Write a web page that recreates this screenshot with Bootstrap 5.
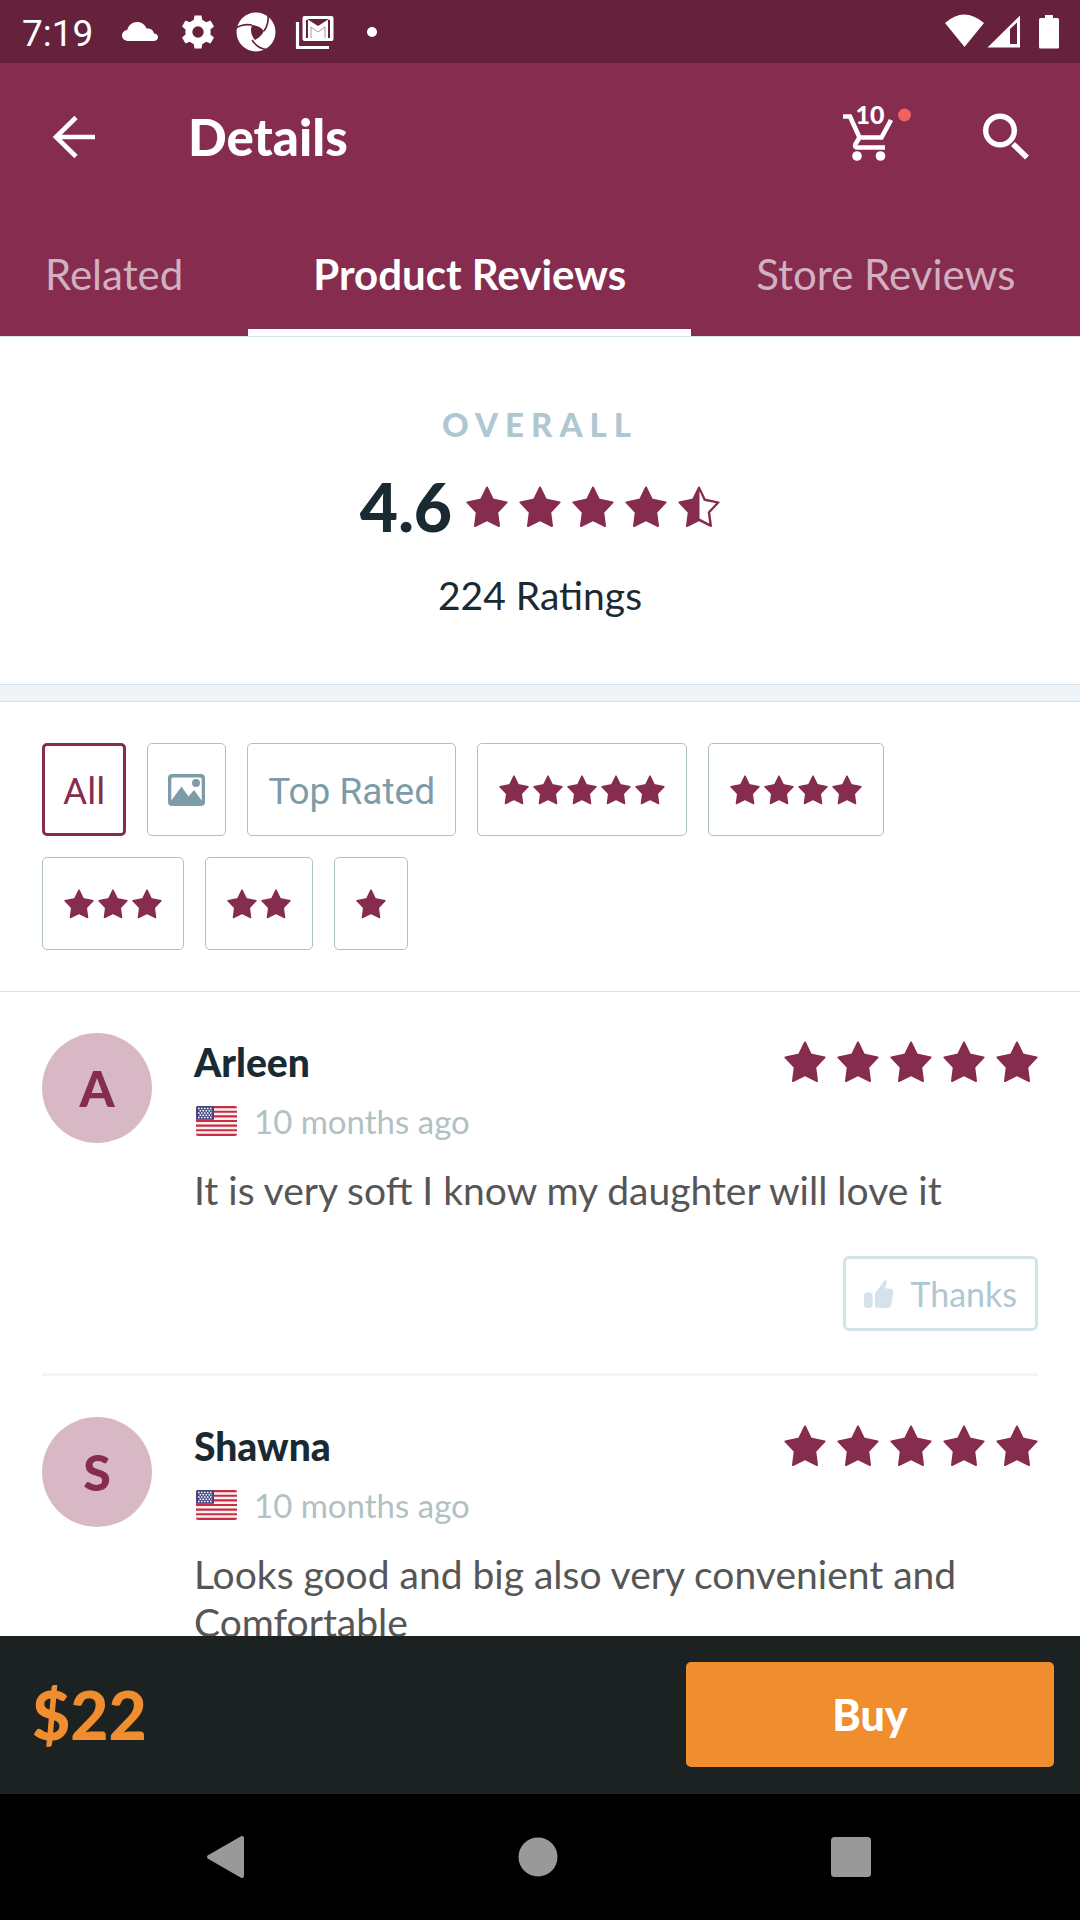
<!DOCTYPE html>
<html lang="en">
<head>
<meta charset="utf-8">
<meta name="viewport" content="width=device-width, initial-scale=1">
<title>Details</title>
<link href="https://cdn.jsdelivr.net/npm/bootstrap@5.3.0/dist/css/bootstrap.min.css" rel="stylesheet">
<style>
:root{--wine:#862c4f;--wine-dark:#66213c;--ink:#1a2a32;--mist:#afc7d1;--line:#d4e2ea;--orange:#f08d2e}
body{font-family:Lato,"Open Sans",sans-serif;color:var(--ink);background:#fff;font-size:39px;line-height:48px}
svg{display:block;flex:none;overflow:visible}
.screen{height:100vh;overflow:hidden}
.screen > main{min-height:0;flex:1 1 0}
.status-bar{background:var(--wine-dark);height:63px;padding:0 10px 0 22px;font-family:Roboto,sans-serif;font-size:37px}
.status-bar > span{padding-top:4px}
.status-icons{gap:16px;margin-left:26px}
.app-top{background:var(--wine);border-bottom:1px solid var(--line)}
.app-bar{height:147px;padding:0 42px}
.app-title{font-size:51px;line-height:56px;margin-left:82px;font-weight:900}
.bare{background:none;border:0;padding:0;color:inherit}
.app-actions{gap:70px}
.tab-link{display:flex;align-items:center;justify-content:center;height:126px;padding:2px 65px 0;color:#d1b0bf;font-size:42px;border-bottom:7px solid transparent;border-top:7px solid transparent;white-space:nowrap}
.tab-link.first{padding-left:45px}
.tab-link.active{color:#fff;font-weight:700;border-bottom-color:#fff}
.overall{padding:66px 42px 65px}
.overall-label{font-size:33px;line-height:42px;letter-spacing:7px;color:var(--mist);font-weight:900;margin:0 0 30px}
.score{font-size:66px;line-height:64px;font-weight:900;margin-right:14px}
.band{height:18px;background:#eef4f8;border:solid var(--line);border-width:1px 0}
.filters{padding:41px 42px;gap:21px;border-bottom:1px solid var(--line)}
.chip{background:#fff;border:1px solid #b0c1c1;border-radius:5px;height:93px;padding:0 20px;color:#7e9ba9;font-family:Roboto,sans-serif;font-size:37px;display:flex;align-items:center}
.chip.chosen{border:3px solid var(--wine);color:var(--wine);padding:0 18px}
.chip.stars{gap:4px;padding:0 21px}
.star{width:42px;height:42px;fill:var(--wine);stroke:var(--wine)}
.star-sm{width:30px;height:30px}
.star-row{gap:11px}
.review{padding-top:41px;margin:0 42px;gap:42px}
.review-body{padding-top:8px;padding-bottom:42px}
.review-rule{height:3px;background:#f2f7f8;margin:0 42px}
.avatar{width:110px;height:110px;background:#d7b8c4;color:var(--wine);font-size:50px;font-weight:900;flex:none}
.reviewer{font-size:39px;line-height:42px;font-weight:900}
.when{font-size:33px;line-height:42px;color:#b0c2c2;gap:16px;margin-top:17px}
.comment{color:#565656;margin:24px 0 42px}
.thanks{border:3px solid var(--line);border-radius:6px;background:#fff;color:var(--mist);height:75px;padding:0 18px;font-size:34px;gap:16px}
.buy-bar{background:#1c2122;padding:26px 26px 27px 32px}
.price{color:var(--orange);font-size:66px;line-height:64px;font-weight:900}
.buy{background:var(--orange);color:#fff;border:0;border-radius:5px;width:36%;height:105px;font-size:43px;font-weight:900}
.sys-nav{background:#000;height:126px;padding:0 72px 0 68px}
</style>
<script src="https://cdn.jsdelivr.net/npm/bootstrap@5.3.0/dist/js/bootstrap.bundle.min.js"></script>
</head>
<body>
<svg width="0" height="0" class="position-absolute" aria-hidden="true">
<symbol id="star" viewBox="0 0 42 42"><path d="M21 1.5 26.8 13.5 40.6 16.4 31.2 26.2 33 40 21 34.2 9 40 10.8 26.2 1.4 16.4 15.2 13.5Z" stroke-width="2" stroke-linejoin="round"/></symbol>
<symbol id="flag" viewBox="0 0 42 30">
<clipPath id="fc"><rect width="41" height="30" rx="2"/></clipPath>
<g clip-path="url(#fc)"><rect width="42" height="30" fill="#f5f2f2"/>
<path d="M0 1.15H42M0 5.75H42M0 10.4H42M0 15H42M0 19.6H42M0 24.2H42M0 28.85H42" stroke="#cc2c42" stroke-width="2.1"/>
<rect width="18" height="13.8" fill="#45467f"/>
<path d="M2 2.5H17M2 7H17M2 11.5H17" stroke="#fff" stroke-width="1.5" stroke-dasharray="1.6 1.4"/>
<path d="M3.5 4.8H16M3.5 9.3H16" stroke="#fff" stroke-width="1.5" stroke-dasharray="1.6 1.4"/></g>
</symbol>
<symbol id="thumb" viewBox="0 0 30 30"><rect x="0" y="13.5" width="8.6" height="15.5" rx="3.4"/><path d="M11 15.500C11 13.500 12 12.700 13.500 11L20.500 1.500C22 -.2 23.400 2.200 22.500 4.500L21.500 7.500C21.200 9 22 9.800 23.500 9.800H26.500C28.800 9.800 29.400 11.300 29.200 13L27.500 24.500C27 27.500 25.800 29 23 29H14.500C12 29 11 28.200 11 25.800Z"/></symbol>
</svg>

<div class="screen d-flex flex-column">
<div class="status-bar flex-shrink-0 d-flex align-items-center text-white">
  <span>7:19</span>
  <div class="status-icons d-flex">
    <svg width="42" height="42" viewBox="0 0 42 42" fill="#fff"><path d="M10 30C5.500 30 3 27.500 3 24.500 3 21.500 5.500 19.200 8.200 19 9.500 14 13.300 11 18 11 22.500 11 26 13.500 27.500 17.500 32 17 34.500 19.500 34.700 22.200 37.500 22.500 39 24.200 39 26.200 39 28.500 37 30 34.500 30Z"/></svg>
    <svg width="42" height="42" viewBox="-21 -21 42 42" fill="#fff"><path fill-rule="evenodd" d="M-3.500-16.500H3.500L4.300-12A13 13 0 0 1 8.200-9.800L12.500-11.500 16-5.400 12.400-2.500A13 13 0 0 1 12.400 2.500L16 5.400 12.500 11.500 8.200 9.800A13 13 0 0 1 4.300 12L3.500 16.500H-3.500L-4.300 12A13 13 0 0 1-8.200 9.800L-12.500 11.500-16 5.400-12.400 2.500A13 13 0 0 1-12.400-2.500L-16-5.400-12.500-11.500-8.200-9.800A13 13 0 0 1-4.300-12ZM0-5.700A5.700 5.700 0 1 0 0 5.700 5.700 5.700 0 1 0 0-5.700Z"/></svg>
    <svg width="42" height="42" viewBox="-21 -21 42 42"><circle r="19.500" fill="#fff"/><path d="M-4-7Q3-7 8-1Q5 5-1 8Q-7 1-4-7Z" fill="#66213c"/><g fill="none" stroke="#66213c" stroke-width="1.600"><path d="M-20-4Q-13-8.500-4-7"/><path d="M12-17Q13-8 8-1"/><path d="M-4 8Q1 16 10 17.500"/></g></svg>
    <svg width="42" height="42" viewBox="0 0 42 42" fill="none" stroke="#fff"><path d="M4.500 11V36.500H36" stroke-width="3.200"/><rect x="9.500" y="5" width="31" height="25" rx="2" fill="#fff" stroke="none"/><path d="M14 8H36L25 15Z" fill="#66213c" stroke="none"/><path d="M14 9V27M36 9V27" stroke="#66213c" stroke-width="2"/><path d="M18 27V16L25 21 32 16V27" stroke="#66213c" stroke-width="1" opacity=".5"/></svg>
    <svg width="42" height="42" viewBox="0 0 42 42" fill="#fff"><circle cx="21" cy="21" r="5"/></svg>
  </div>
  <div class="d-flex ms-auto">
    <svg width="40" height="42" viewBox="0 0 40 42" fill="#fff"><path d="M20.500 36 1 12Q20-5 40 12Z"/></svg>
    <svg width="40" height="42" viewBox="0 0 40 42"><path d="M3.500 36.500H36V4.500Z" fill="#fff"/><path d="M26 18 33 11.500V33H26Z" fill="#66213c"/></svg>
    <svg class="ms-1" width="42" height="42" viewBox="0 0 42 42" fill="#fff"><path d="M17 4H25V7H29.500Q31 7 31 8.500V36Q31 37.500 29.500 37.500H12.500Q11 37.500 11 36V8.500Q11 7 12.500 7H17Z"/></svg>
  </div>
</div>

<header class="app-top flex-shrink-0 text-white">
  <div class="app-bar d-flex align-items-center">
    <button class="bare" aria-label="Back"><svg width="64" height="64" viewBox="0 0 64 64" fill="none" stroke="#fff" stroke-width="4.600"><path d="M53 32H14M34 12.500 14 32 34 51.500"/></svg></button>
    <h1 class="app-title mb-0">Details</h1>
    <div class="app-actions d-flex align-items-center ms-auto">
      <button class="bare" aria-label="Cart, 10 items"><svg width="70" height="64" viewBox="0 0 70 64" fill="none" stroke="#fff" stroke-width="4.600"><path d="M0 11.500H7L16.500 32.500H38.500L48 15M16.500 32.500 12.500 39Q11 42.500 15 42.500H42"/><circle cx="14" cy="51" r="4.800" fill="#fff" stroke="none"/><circle cx="37.500" cy="51" r="4.800" fill="#fff" stroke="none"/><circle cx="61.500" cy="10" r="6.500" fill="#f0625f" stroke="none"/><text x="27" y="19" text-anchor="middle" fill="#fff" stroke="none" font-family="Lato,sans-serif" font-weight="900" font-size="25">10</text></svg></button>
      <button class="bare" aria-label="Search"><svg width="55" height="64" viewBox="0 0 55 64" fill="none" stroke="#fff"><circle cx="17" cy="25.500" r="14.300" stroke-width="5.400"/><path d="M30 39 44 52.500" stroke-width="5.600"/></svg></button>
    </div>
  </div>
  <nav class="nav flex-nowrap overflow-hidden">
    <a class="tab-link first text-decoration-none" href="#">Related</a>
    <a class="tab-link active text-decoration-none" href="#" aria-current="page">Product Reviews</a>
    <a class="tab-link text-decoration-none" href="#">Store Reviews</a>
  </nav>
</header>

<main class="overflow-hidden">
  <section class="overall text-center">
    <h2 class="overall-label">OVERALL</h2>
    <div class="d-flex justify-content-center align-items-center">
      <span class="score">4.6</span>
      <div class="star-row d-flex">
        <svg class="star"><use href="#star"/></svg><svg class="star"><use href="#star"/></svg><svg class="star"><use href="#star"/></svg><svg class="star"><use href="#star"/></svg>
        <svg class="star" viewBox="0 0 42 42" stroke-width="2" stroke-linejoin="round"><path d="M21 1.500 26.800 13.500 40.600 16.400 31.200 26.200 33 40 21 34.200 9 40 10.800 26.200 1.400 16.400 15.200 13.500Z"/><path d="M21.500 5 25.800 14.800 38 17.200 29.700 26 31.200 37.400 21.500 32.600Z" fill="#fff" stroke="none"/></svg>
      </div>
    </div>
    <p class="mb-0 mt-4 pt-2">224 Ratings</p>
  </section>
  <div class="band"></div>
  <section class="filters d-flex flex-wrap" aria-label="Filter reviews">
    <button class="chip chosen pt-1">All</button>
    <button class="chip" aria-label="With photos"><svg width="37" height="32" viewBox="0 0 37 32" fill="#7e9ba9"><path fill-rule="evenodd" d="M4 0H33Q37 0 37 4V28Q37 32 33 32H4Q0 32 0 28V4Q0 0 4 0ZM5 3.500Q3.300 3.500 3.300 5V26.500L13.500 12.500 20.500 22.500 26 16 33.700 26.500V5Q33.700 3.500 32 3.500Z"/><circle cx="28" cy="9" r="4"/></svg></button>
    <button class="chip pt-1">Top Rated</button>
    <button class="chip stars" aria-label="5 stars"><svg class="star star-sm"><use href="#star"/></svg><svg class="star star-sm"><use href="#star"/></svg><svg class="star star-sm"><use href="#star"/></svg><svg class="star star-sm"><use href="#star"/></svg><svg class="star star-sm"><use href="#star"/></svg></button>
    <button class="chip stars" aria-label="4 stars"><svg class="star star-sm"><use href="#star"/></svg><svg class="star star-sm"><use href="#star"/></svg><svg class="star star-sm"><use href="#star"/></svg><svg class="star star-sm"><use href="#star"/></svg></button>
    <button class="chip stars" aria-label="3 stars"><svg class="star star-sm"><use href="#star"/></svg><svg class="star star-sm"><use href="#star"/></svg><svg class="star star-sm"><use href="#star"/></svg></button>
    <button class="chip stars" aria-label="2 stars"><svg class="star star-sm"><use href="#star"/></svg><svg class="star star-sm"><use href="#star"/></svg></button>
    <button class="chip stars" aria-label="1 star"><svg class="star star-sm"><use href="#star"/></svg></button>
  </section>
  <article class="review d-flex">
    <div class="avatar rounded-circle d-flex align-items-center justify-content-center">A</div>
    <div class="review-body flex-fill">
      <div class="d-flex justify-content-between align-items-center">
        <span class="reviewer">Arleen</span>
        <div class="star-row d-flex"><svg class="star"><use href="#star"/></svg><svg class="star"><use href="#star"/></svg><svg class="star"><use href="#star"/></svg><svg class="star"><use href="#star"/></svg><svg class="star"><use href="#star"/></svg></div>
      </div>
      <div class="when d-flex align-items-center"><svg width="44" height="30" viewBox="-2 0 44 30"><use href="#flag" width="42" height="30"/></svg><span>10 months ago</span></div>
      <p class="comment">It is very soft I know my daughter will love it</p>
      <button class="thanks d-flex align-items-center ms-auto"><svg width="30" height="30" fill="#d4e2ea"><use href="#thumb"/></svg>Thanks</button>
    </div>
  </article>
  <div class="review-rule"></div>
  <article class="review d-flex">
    <div class="avatar rounded-circle d-flex align-items-center justify-content-center">S</div>
    <div class="review-body flex-fill">
      <div class="d-flex justify-content-between align-items-center">
        <span class="reviewer">Shawna</span>
        <div class="star-row d-flex"><svg class="star"><use href="#star"/></svg><svg class="star"><use href="#star"/></svg><svg class="star"><use href="#star"/></svg><svg class="star"><use href="#star"/></svg><svg class="star"><use href="#star"/></svg></div>
      </div>
      <div class="when d-flex align-items-center"><svg width="44" height="30" viewBox="-2 0 44 30"><use href="#flag" width="42" height="30"/></svg><span>10 months ago</span></div>
      <p class="comment">Looks good and big also very convenient and Comfortable</p>
    </div>
  </article>
</main>

<footer class="flex-shrink-0">
  <div class="buy-bar d-flex align-items-center justify-content-between">
    <span class="price">$22</span>
    <button class="buy">Buy</button>
  </div>
  <div class="sys-nav d-flex align-items-center justify-content-around">
    <button class="bare" aria-label="Back"><svg width="48" height="48" viewBox="0 0 48 48" fill="#999" stroke="#999" stroke-width="4" stroke-linejoin="round"><path d="M8 24 41 5V43Z"/></svg></button>
    <button class="bare" aria-label="Home"><svg width="48" height="48" viewBox="0 0 48 48" fill="#999"><circle cx="24" cy="24" r="19.500"/></svg></button>
    <button class="bare" aria-label="Recent apps"><svg width="48" height="48" viewBox="0 0 48 48" fill="#999"><rect x="4" y="4" width="40" height="40" rx="3.500"/></svg></button>
  </div>
</footer>
</div>
</body>
</html>
